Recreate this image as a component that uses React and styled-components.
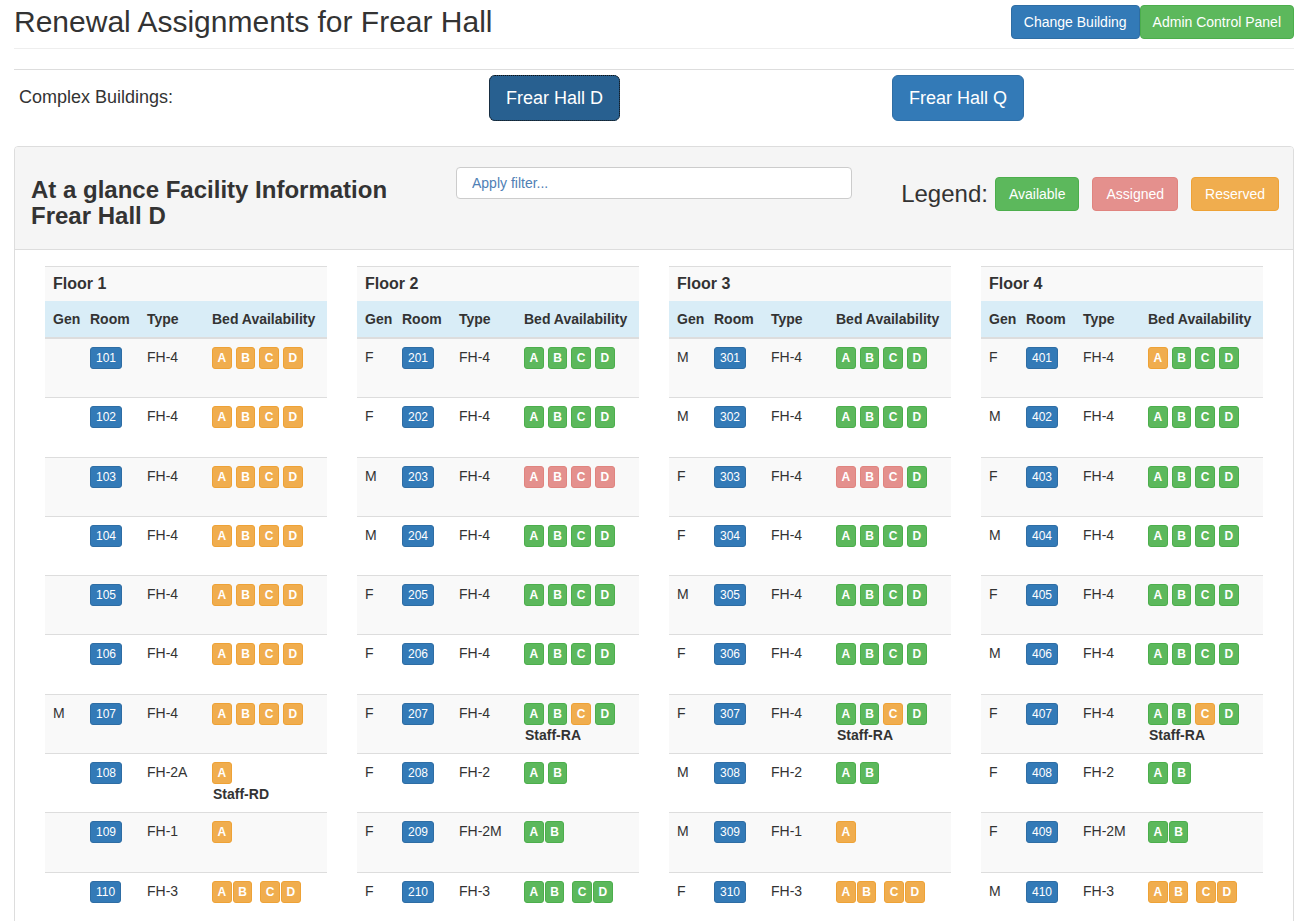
import React from "react";
import styled, { createGlobalStyle } from "styled-components";

const GlobalStyle = createGlobalStyle`
  body {
    margin: 0;
    font-family: "Liberation Sans", Arial, sans-serif;
    font-size: 14px;
    line-height: 1.42857;
    color: #333;
    background: #fff;
  }
  * { box-sizing: border-box; }
`;

const Page = styled.div`
  padding: 0 3px 0 14px;
`;

const TopBar = styled.header`
  display: flex;
  justify-content: space-between;
  align-items: flex-start;
  padding: 5px 0 9px;
  border-bottom: 1px solid #eee;
`;

const Title = styled.h1`
  margin: 0;
  font-size: 30px;
  font-weight: 400;
  line-height: 33px;
`;

const BtnGroup = styled.div`
  display: flex;
`;

const colors = {
  primary: ["#337ab7", "#2e6da4"],
  success: ["#5cb85c", "#4cae4c"],
  warning: ["#f0ad4e", "#eea236"],
  assigned: ["#e4908d", "#e0847f"],
  active: ["#286090", "#204d74"],
};

const Button = styled.button`
  font-family: inherit;
  font-size: 14px;
  line-height: 20px;
  padding: 6px ${(p) => (p.$wide ? "13px" : "12px")};
  color: #fff;
  border-radius: 4px;
  border: 1px solid ${(p) => colors[p.$tone][1]};
  background: ${(p) => colors[p.$tone][0]};
  cursor: pointer;
`;

const Rule = styled.hr`
  margin: 20px 0 0;
  border: 0;
  border-top: 1px solid #ddd;
`;

const BuildingRow = styled.div`
  display: grid;
  grid-template-columns: 475px 403px auto;
  align-items: center;
  margin-top: 5px;
`;

const BuildingLabel = styled.div`
  padding-left: 5px;
  padding-bottom: 1px;
  font-size: 18px;
`;

const BigButton = styled.button`
  justify-self: start;
  font-family: inherit;
  font-size: 18px;
  line-height: 24px;
  padding: 10px 16px;
  color: #fff;
  border-radius: 6px;
  border: 1px solid ${(p) => (p.$active ? "#204d74" : "#2e6da4")};
  background: ${(p) => (p.$active ? "#286090" : "#337ab7")};
  outline: ${(p) => (p.$active ? "1px dotted #111" : "none")};
  outline-offset: -1px;
  cursor: pointer;
`;

const Panel = styled.section`
  margin-top: 25px;
  border: 1px solid #ddd;
  border-radius: 4px;
`;

const PanelHead = styled.div`
  display: flex;
  align-items: flex-start;
  padding: 20px 14px 20px 16px;
  background: #f5f5f5;
  border-bottom: 1px solid #ddd;
  border-radius: 3px 3px 0 0;
`;

const PanelTitle = styled.h3`
  flex: 0 0 425px;
  margin: 10px 0 0;
  font-size: 24px;
  font-weight: 700;
  line-height: 26px;
`;

const Filter = styled.input`
  width: 396px;
  height: 32px;
  padding: 6px 15px;
  font-family: inherit;
  font-size: 14px;
  border: 1px solid #ccc;
  border-radius: 4px;
  background: #fff;
  &::placeholder {
    color: #4f80b5;
  }
`;

const Legend = styled.div`
  margin-left: auto;
  margin-top: 10px;
  display: flex;
  align-items: center;
  gap: 13px;
`;

const LegendLabel = styled.span`
  font-size: 24px;
  margin-right: -6px;
`;

const PanelBody = styled.div`
  display: grid;
  grid-template-columns: repeat(4, 1fr);
  gap: 30px;
  padding: 16px 30px 15px;
`;

const FloorTitle = styled.div`
  border-top: 1px solid #ddd;
  background: #f9f9f9;
  padding: 7px 8px;
  font-size: 16px;
  font-weight: 700;
  line-height: 20px;
`;

const Table = styled.table`
  width: 100%;
  border-collapse: collapse;
  table-layout: fixed;
`;

const Th = styled.th`
  text-align: left;
  padding: 8px 0 8px 8px;
  background: #d9edf7;
  border-bottom: 2px solid #ddd;
  white-space: nowrap;
  line-height: 20px;
`;

const Tr = styled.tr`
  &:nth-child(odd) {
    background: #f9f9f9;
  }
`;

const Td = styled.td`
  vertical-align: top;
  padding: 8px 0 8px 8px;
  border-top: 1px solid #ddd;
  white-space: nowrap;
  line-height: 20px;
`;

const XsBtn = styled.span`
  display: inline-block;
  font-size: 12px;
  line-height: 18px;
  padding: 1px ${(p) => (p.$bold ? "4.5px" : "5px")};
  border-radius: 3px;
  color: #fff;
  font-weight: ${(p) => (p.$bold ? 700 : 400)};
  border: 1px solid ${(p) => colors[p.$tone][1]};
  background: ${(p) => colors[p.$tone][0]};
`;

const Beds = styled.div`
  display: flex;
  gap: ${(p) => (p.$wide ? "8px" : "4px")};
  height: 22px;
`;

const Pair = styled.div`
  display: flex;
  gap: 1px;
`;

const Staff = styled.div`
  min-height: 20.3px;
  font-weight: 700;
  padding-left: 1px;
`;

const tone = { o: "warning", g: "success", r: "assigned" };
const letters = ["A", "B", "C", "D"];

const floors = [
  [
    ["", "101", "FH-4", "oooo"],
    ["", "102", "FH-4", "oooo"],
    ["", "103", "FH-4", "oooo"],
    ["", "104", "FH-4", "oooo"],
    ["", "105", "FH-4", "oooo"],
    ["", "106", "FH-4", "oooo"],
    ["M", "107", "FH-4", "oooo"],
    ["", "108", "FH-2A", "o", "Staff-RD"],
    ["", "109", "FH-1", "o"],
    ["", "110", "FH-3", "oooo"],
  ],
  [
    ["F", "201", "FH-4", "gggg"],
    ["F", "202", "FH-4", "gggg"],
    ["M", "203", "FH-4", "rrrr"],
    ["M", "204", "FH-4", "gggg"],
    ["F", "205", "FH-4", "gggg"],
    ["F", "206", "FH-4", "gggg"],
    ["F", "207", "FH-4", "ggog", "Staff-RA"],
    ["F", "208", "FH-2", "gg"],
    ["F", "209", "FH-2M", "gg"],
    ["F", "210", "FH-3", "gggg"],
  ],
  [
    ["M", "301", "FH-4", "gggg"],
    ["M", "302", "FH-4", "gggg"],
    ["F", "303", "FH-4", "rrrg"],
    ["F", "304", "FH-4", "gggg"],
    ["M", "305", "FH-4", "gggg"],
    ["F", "306", "FH-4", "gggg"],
    ["F", "307", "FH-4", "ggog", "Staff-RA"],
    ["M", "308", "FH-2", "gg"],
    ["M", "309", "FH-1", "o"],
    ["F", "310", "FH-3", "oooo"],
  ],
  [
    ["F", "401", "FH-4", "oggg"],
    ["M", "402", "FH-4", "gggg"],
    ["F", "403", "FH-4", "gggg"],
    ["M", "404", "FH-4", "gggg"],
    ["F", "405", "FH-4", "gggg"],
    ["M", "406", "FH-4", "gggg"],
    ["F", "407", "FH-4", "ggog", "Staff-RA"],
    ["F", "408", "FH-2", "gg"],
    ["F", "409", "FH-2M", "gg"],
    ["M", "410", "FH-3", "oooo"],
  ],
];

// FH-3 and FH-2M rooms show their beds as joined pairs
function groupsFor(type, n) {
  if (type === "FH-3") return [[0, 1], [2, 3]];
  if (type === "FH-2M") return [[0, 1]];
  return Array.from({ length: n }, (_, i) => [i]);
}

const BedCell = ({ type, status, label }) => (
  <Td>
    <Beds $wide={type === "FH-3"}>
      {groupsFor(type, status.length).map((g, gi) => (
        <Pair key={gi}>
          {g.map((i) => (
            <XsBtn key={i} $bold $tone={tone[status[i]]}>
              {letters[i]}
            </XsBtn>
          ))}
        </Pair>
      ))}
    </Beds>
    <Staff>{label}</Staff>
  </Td>
);

const Floor = ({ number, rooms }) => (
  <div>
    <FloorTitle>Floor {number}</FloorTitle>
    <Table>
      <colgroup>
        <col style={{ width: 37 }} />
        <col style={{ width: 57 }} />
        <col style={{ width: 65 }} />
        <col />
      </colgroup>
      <thead>
        <tr>
          <Th>Gen</Th>
          <Th>Room</Th>
          <Th>Type</Th>
          <Th>Bed Availability</Th>
        </tr>
      </thead>
      <tbody>
        {rooms.map(([gen, room, type, status, label]) => (
          <Tr key={room}>
            <Td>{gen}</Td>
            <Td>
              <XsBtn $tone="primary">{room}</XsBtn>
            </Td>
            <Td>{type}</Td>
            <BedCell type={type} status={status} label={label} />
          </Tr>
        ))}
      </tbody>
    </Table>
  </div>
);

export default function App() {
  return (
    <Page>
      <GlobalStyle />
      <TopBar>
        <Title>Renewal Assignments for Frear Hall</Title>
        <BtnGroup>
          <Button $tone="primary">Change Building</Button>
          <Button $tone="success">Admin Control Panel</Button>
        </BtnGroup>
      </TopBar>
      <Rule />
      <BuildingRow>
        <BuildingLabel>Complex Buildings:</BuildingLabel>
        <BigButton $active>Frear Hall D</BigButton>
        <BigButton>Frear Hall Q</BigButton>
      </BuildingRow>
      <Panel>
        <PanelHead>
          <PanelTitle>
            At a glance Facility Information
            <br />
            Frear Hall D
          </PanelTitle>
          <Filter placeholder="Apply filter..." />
          <Legend>
            <LegendLabel>Legend:</LegendLabel>
            <Button $wide $tone="success">Available</Button>
            <Button $wide $tone="assigned">Assigned</Button>
            <Button $wide $tone="warning">Reserved</Button>
          </Legend>
        </PanelHead>
        <PanelBody>
          {floors.map((rooms, i) => (
            <Floor key={i} number={i + 1} rooms={rooms} />
          ))}
        </PanelBody>
      </Panel>
    </Page>
  );
}
